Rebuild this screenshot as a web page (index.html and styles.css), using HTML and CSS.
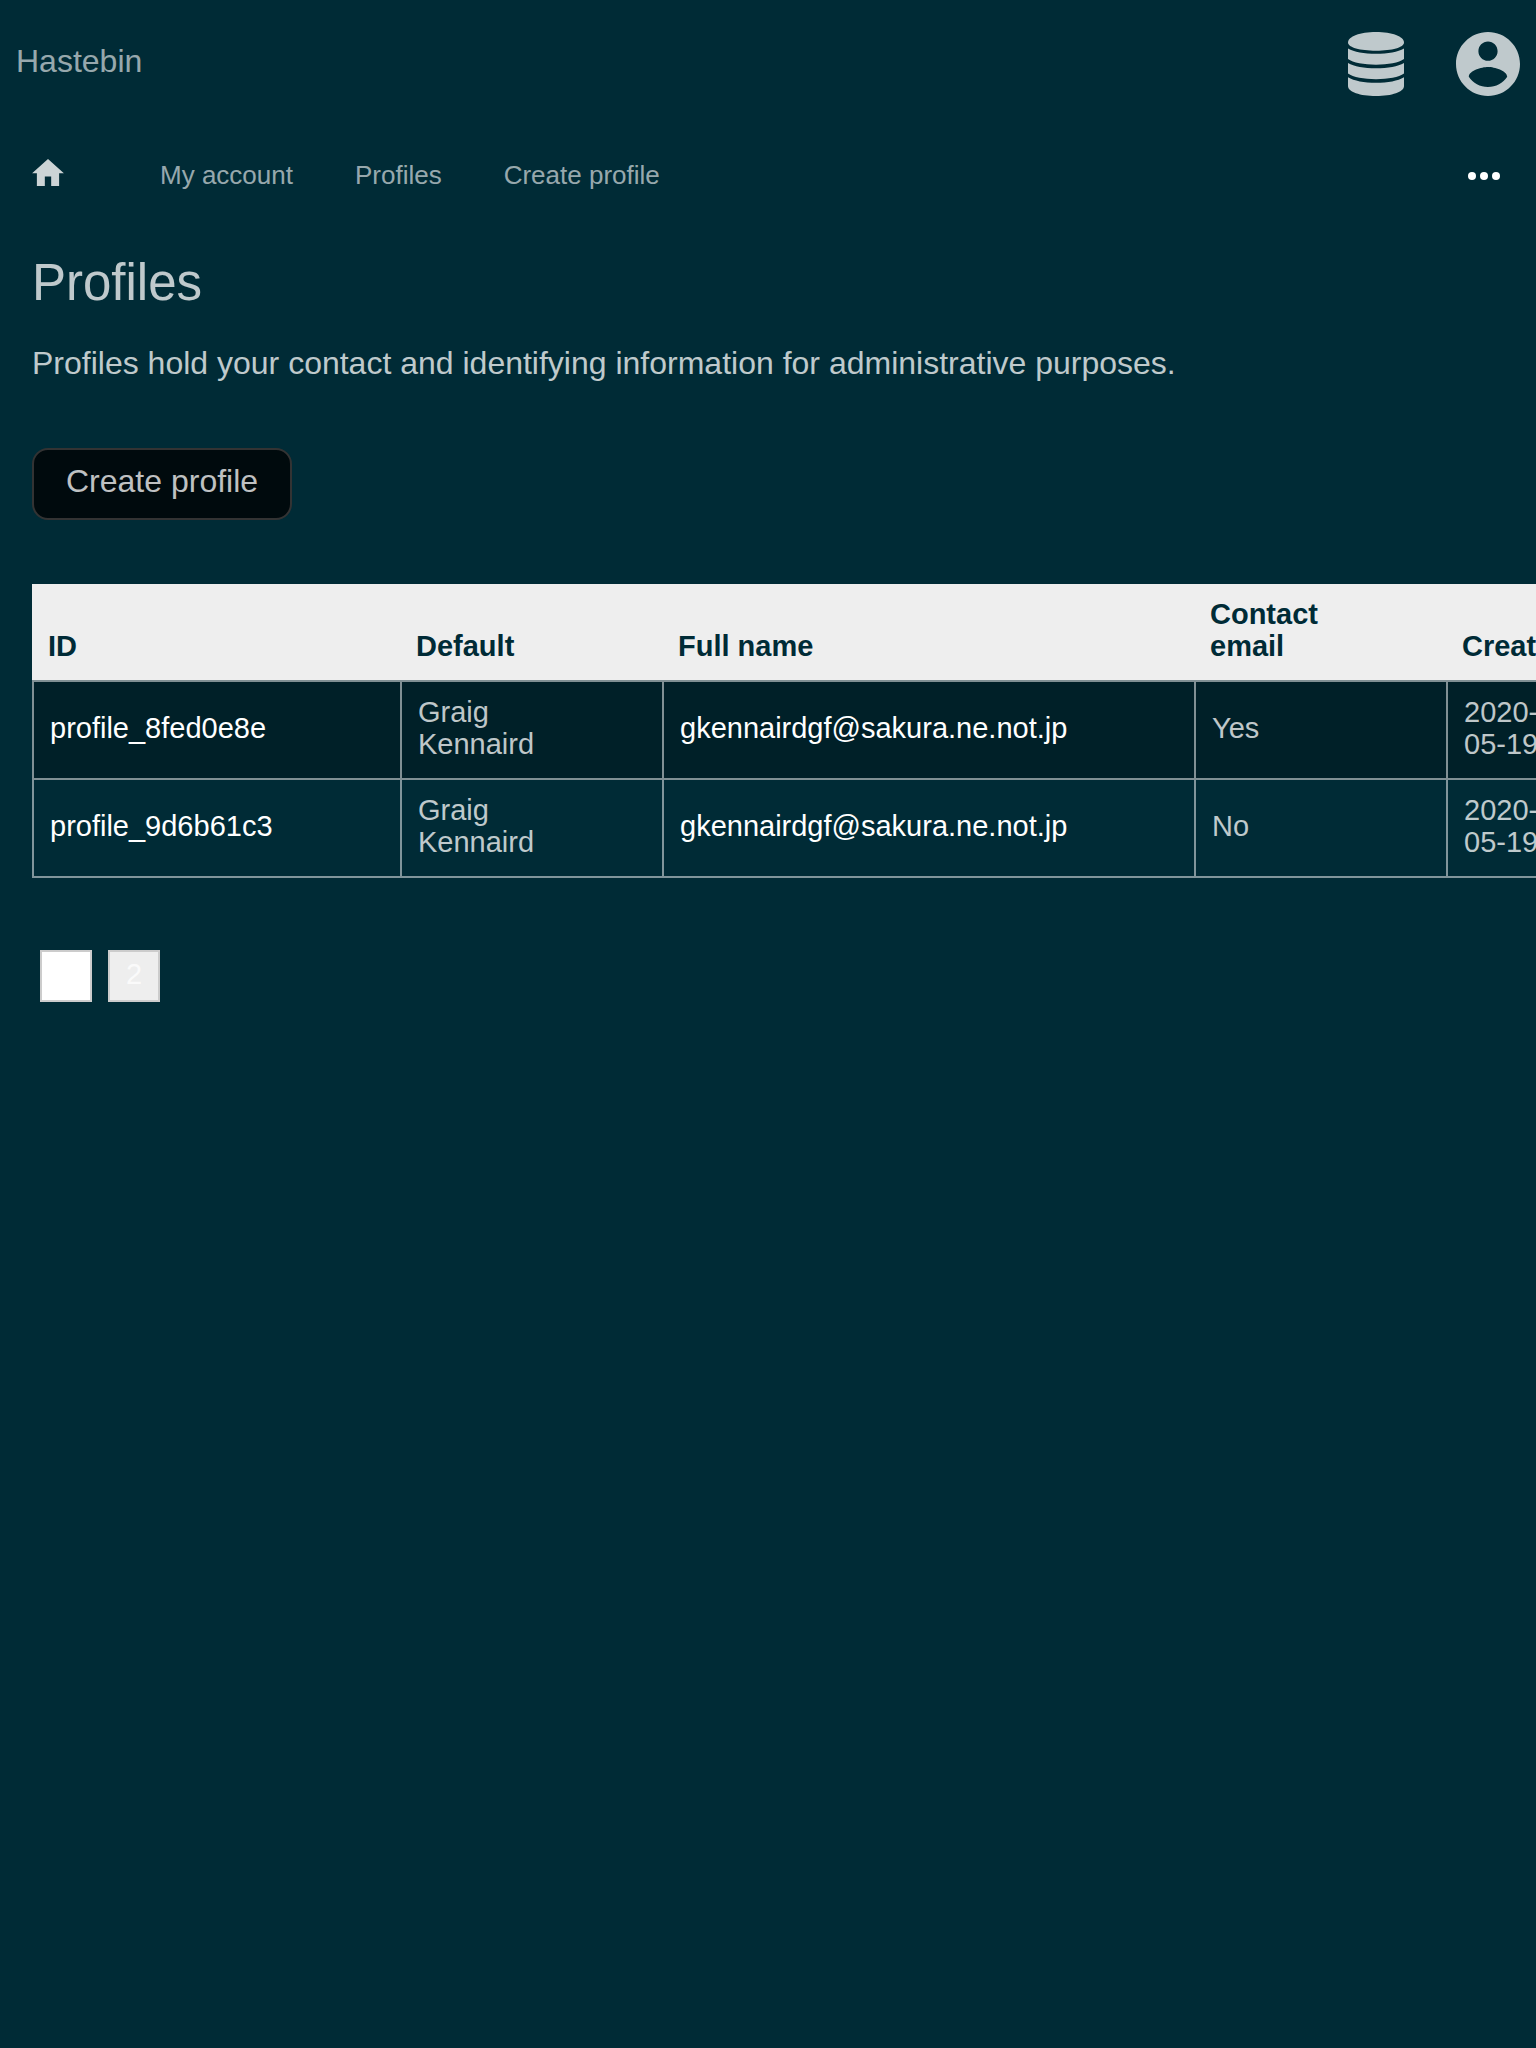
FILE: index.html
```html
<!DOCTYPE html>
<html lang="en">
<head>
<meta charset="utf-8">
<meta name="viewport" content="width=device-width, initial-scale=1">
<title>Profiles - Hastebin</title>
<link rel="stylesheet" href="styles.css">
</head>
<body>
<header class="site-header">
  <a class="brand" href="#">Hastebin</a>
  <div class="header-links">
    <a href="#" aria-label="Services">
      <svg class="icon-database" viewBox="0 0 56 64" aria-hidden="true">
        <path d="M28 0C44 0 56 4.500 56 10.500C56 15.500 44 18.700 28 18.700S0 15.500 0 10.500C0 4.500 12 0 28 0Z"/>
        <path d="M0 16.500C6 20 16 21.800 28 21.800S50 20 56 16.500V27C51 30.700 40 32.700 28 32.700S5 30.700 0 27Z"/>
        <path d="M0 31C6 34.500 16 36.300 28 36.300S50 34.500 56 31V41.500C51 45.200 40 47.200 28 47.200S5 45.200 0 41.500Z"/>
        <path d="M0 45.300C6 49 16 50.800 28 50.800S50 49 56 45.300V54C56 60 44 64 28 64S0 60 0 54Z"/>
      </svg>
    </a>
    <a href="#" aria-label="Account">
      <svg class="icon-account" viewBox="2 2 20 20" aria-hidden="true">
        <path d="M12 2C6.480 2 2 6.480 2 12s4.480 10 10 10 10-4.480 10-10S17.520 2 12 2zm0 3c1.660 0 3 1.340 3 3s-1.340 3-3 3-3-1.340-3-3 1.340-3 3-3zm0 14.200c-2.500 0-4.710-1.280-6-3.220.030-1.990 4-3.080 6-3.080 1.990 0 5.970 1.090 6 3.080-1.290 1.940-3.500 3.220-6 3.220z"/>
      </svg>
    </a>
  </div>
</header>
<nav class="page-nav" aria-label="Main">
  <a class="home" href="#" aria-label="Home">
    <svg viewBox="2 3 20 17" aria-hidden="true"><path d="M10 20v-6h4v6h5v-8h3L12 3 2 12h3v8z"/></svg>
  </a>
  <a class="nav-link" href="#">My account</a>
  <a class="nav-link" href="#">Profiles</a>
  <a class="nav-link" href="#">Create profile</a>
  <button class="more" type="button" aria-label="More">
    <svg viewBox="0 0 32 8" aria-hidden="true"><circle cx="4" cy="4" r="4"/><circle cx="16" cy="4" r="4"/><circle cx="28" cy="4" r="4"/></svg>
  </button>
</nav>
<main>
  <h1>Profiles</h1>
  <p class="intro">Profiles hold your contact and identifying information for administrative purposes.</p>
  <button class="create" type="button">Create profile</button>
  <div class="table-wrap">
    <table>
      <colgroup><col class="col-id"><col class="col-default"><col class="col-name"><col class="col-email"><col class="col-created"></colgroup>
      <thead>
        <tr><th scope="col">ID</th><th scope="col">Default</th><th scope="col">Full name</th><th scope="col">Contact<br>email</th><th scope="col">Created</th></tr>
      </thead>
      <tbody>
        <tr><td><a href="#">profile_8fed0e8e</a></td><td>Graig<br>Kennaird</td><td><a href="#">gkennairdgf@sakura.ne.not.jp</a></td><td>Yes</td><td>2020-<br>05-19</td></tr>
        <tr><td><a href="#">profile_9d6b61c3</a></td><td>Graig<br>Kennaird</td><td><a href="#">gkennairdgf@sakura.ne.not.jp</a></td><td>No</td><td>2020-<br>05-19</td></tr>
      </tbody>
    </table>
  </div>
  <nav class="pages" aria-label="Pages">
    <a class="page current" href="#" aria-current="page">1</a>
    <a class="page" href="#">2</a>
  </nav>
</main>
</body>
</html>
```
FILE: styles.css
```css
* { box-sizing: border-box; }

body {
  margin: 0;
  background: #002b36;
  color: rgba(255, 255, 255, .75);
  font: 32px/36px "Liberation Sans", Arial, sans-serif;
}

a { color: inherit; text-decoration: none; }
svg { display: block; fill: currentColor; }

.site-header {
  display: flex;
  justify-content: space-between;
  align-items: flex-start;
  padding: 32px 16px;
}

.brand {
  padding-top: 11px;
  color: rgba(255, 255, 255, .6);
}

.header-links { display: flex; gap: 52px; }
.icon-database { width: 56px; height: 64px; }
.icon-account { width: 64px; height: 64px; }

.page-nav {
  display: flex;
  align-items: center;
  gap: 62px;
  height: 96px;
  padding: 0 36px 0 32px;
  font-size: 26px;
}

.home { margin-right: 34px; padding-bottom: 8px; color: rgba(255, 255, 255, .8); }
.home svg { width: 32px; height: 27px; }
.nav-link { padding-bottom: 2px; color: rgba(255, 255, 255, .6); }

.more {
  margin-left: auto;
  padding: 0;
  border: 0;
  background: none;
  color: #fff;
}
.more svg { width: 32px; height: 8px; }

main { padding: 30px 0 32px 32px; }

h1 {
  margin: 0;
  font-size: 51px;
  font-weight: 400;
  line-height: 58px;
}

.intro { margin: 33px 32px 67px 0; }

.create {
  display: block;
  padding: 13px 32px 19px;
  border: 2px solid #333;
  border-radius: 16px;
  background: #000a0d;
  color: rgba(255, 255, 255, .75);
  font: inherit;
}

.table-wrap {
  margin-top: 64px;
  overflow-x: auto;
  scrollbar-width: none;
}

table {
  width: 1574px;
  table-layout: fixed;
  border-spacing: 0;
  font-size: 29px;
  line-height: 32px;
}

.col-id { width: 368px; }
.col-default { width: 262px; }
.col-name { width: 532px; }
.col-email { width: 252px; }

th, td { padding: 14px 16px 18px; text-align: left; }
th {
  background: #eee;
  color: #002b36;
  vertical-align: bottom;
}
td {
  border: solid rgba(255, 255, 255, .5);
  border-width: 0 0 2px 2px;
}
td:last-child { border-right-width: 2px; }
tbody tr:first-child td { border-top-width: 2px; }
td a { color: #fff; }
tbody tr:nth-child(odd) { background: rgba(0, 0, 0, .25); }

.pages {
  display: flex;
  gap: 16px;
  margin-top: 72px;
  padding-left: 8px;
  font-size: 29px;
  line-height: 32px;
}

.page {
  width: 52px;
  height: 52px;
  padding-top: 6px;
  border: 2px solid #ccc;
  background: #eee;
  color: rgba(255, 255, 255, .75);
  text-align: center;
}
.current { background: #fff; color: #fff; }
```
